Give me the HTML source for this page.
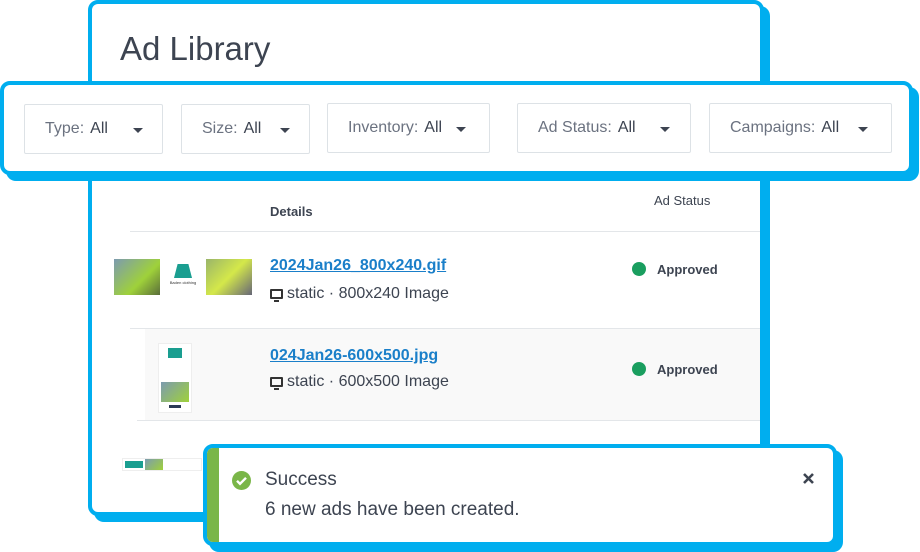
<!DOCTYPE html>
<html><head><meta charset="utf-8"><style>
*{box-sizing:border-box;margin:0;padding:0}
body{width:920px;height:552px;background:#fff;position:relative;overflow:hidden;font-family:"Liberation Sans",sans-serif;color:#3d4451}
.card{position:absolute;background:#fff;border:4px solid #00aeef;border-radius:10px;box-shadow:6px 6px 0 #00aeef}
.abs{position:absolute}
.f{position:absolute;border:1px solid #dde2e6;border-radius:2px;height:50px;font-size:16px;color:#6b7280;display:flex;align-items:center;padding-left:20px}
.f b{font-weight:normal;color:#3d4451;margin-left:6px}
.car{width:0;height:0;border-left:5px solid transparent;border-right:5px solid transparent;border-top:5px solid #3d4451;position:absolute;top:23px}
.link{color:#1a7fc9;font-weight:bold;font-size:16px;text-decoration:underline}
.sub{font-size:16px;color:#3d4451}
.dot{position:absolute;width:14px;height:14px;border-radius:50%;background:#1a9e5f}
.appr{position:absolute;font-size:13px;font-weight:bold;color:#3d4451}
.mon{display:inline-block;width:13px;height:10px;border:2px solid #333;border-radius:1px;position:relative;margin-right:4px;vertical-align:-1px}
.mon:after{content:"";position:absolute;left:2px;bottom:-5px;width:5px;height:2px;background:#333}
</style></head><body>
<div class="card" style="left:88px;top:0;width:676px;height:516px">
</div>
<div class="abs" style="left:120px;top:30px;font-size:33px;color:#3d4451">Ad Library</div>
<div class="abs" style="left:270px;top:204px;font-size:13px;font-weight:bold">Details</div>
<div class="abs" style="left:654px;top:193px;font-size:13px;color:#3d4451">Ad Status</div>
<div class="abs" style="left:130px;top:231px;width:630px;height:1px;background:#e3e6e9"></div>
<div class="abs" style="left:114px;top:259px;width:138px;height:36px;display:flex">
<div style="width:46px;background:linear-gradient(135deg,#7c9bb0,#9fd13a 60%,#5a6d3a)"></div>
<div style="width:46px;background:#fff;display:flex;flex-direction:column;align-items:center;padding-top:5px"><div style="width:18px;height:14px;background:#1a9e90;clip-path:polygon(20% 0,80% 0,100% 100%,0 100%)"></div><div style="font-size:4px;margin-top:2px;color:#333">Baden clothing</div></div>
<div style="width:46px;background:linear-gradient(135deg,#9ab56a,#d4e84a 50%,#667)"></div>
</div>
<div class="abs link" style="left:270px;top:257px">2024Jan26_800x240.gif</div>
<div class="abs sub" style="left:270px;top:285px"><span class="mon"></span>static · 800x240 Image</div>
<div class="dot" style="left:632px;top:262px"></div>
<div class="appr" style="left:657px;top:262px">Approved</div>
<div class="abs" style="left:130px;top:328px;width:630px;height:1px;background:#e3e6e9"></div>
<div class="abs" style="left:145px;top:329px;width:615px;height:91px;background:#f9f9f9"></div>
<div class="abs" style="left:137px;top:420px;width:623px;height:1px;background:#e3e6e9"></div>
<div class="abs" style="left:158px;top:343px;width:34px;height:70px;background:#fff;border:1px solid #eee;display:flex;flex-direction:column;align-items:center;padding-top:4px">
<div style="width:14px;height:10px;background:#1a9e90"></div><div style="height:24px"></div><div style="width:28px;height:20px;background:linear-gradient(135deg,#7c9bb0,#9fd13a)"></div><div style="width:12px;height:3px;background:#2b3a55;margin-top:3px"></div></div>
<div class="abs link" style="left:270px;top:347px">024Jan26-600x500.jpg</div>
<div class="abs sub" style="left:270px;top:373px"><span class="mon"></span>static · 600x500 Image</div>
<div class="dot" style="left:632px;top:362px"></div>
<div class="appr" style="left:657px;top:362px">Approved</div>
<div class="abs" style="left:122px;top:458px;width:80px;height:13px;border:1px solid #eee;display:flex"><div style="width:18px;background:#1a9e90;margin:2px"></div><div style="width:18px;background:linear-gradient(135deg,#7c9bb0,#9fd13a)"></div></div>

<div class="card" style="left:0;top:81px;width:913px;height:94px;border-radius:10px"></div>
<div class="f" style="left:24px;top:104px;width:139px">Type:<b>All</b><span class="car" style="left:108px"></span></div>
<div class="f" style="left:181px;top:104px;width:129px">Size:<b>All</b><span class="car" style="left:98px"></span></div>
<div class="f" style="left:327px;top:103px;width:163px">Inventory:<b>All</b><span class="car" style="left:128px"></span></div>
<div class="f" style="left:517px;top:103px;width:174px">Ad Status:<b>All</b><span class="car" style="left:142px"></span></div>
<div class="f" style="left:709px;top:103px;width:183px">Campaigns:<b>All</b><span class="car" style="left:148px"></span></div>

<div class="card" style="left:203px;top:444px;width:634px;height:102px;overflow:hidden">
<div class="abs" style="left:0;top:0;width:12px;height:100%;background:#7ab648"></div>
</div>
<svg class="abs" style="left:232px;top:471px" width="19" height="19" viewBox="0 0 19 19"><circle cx="9.5" cy="9.5" r="9.5" fill="#7ab648"/><path d="M5 9.8l3 3 6-6" stroke="#fff" stroke-width="2.4" fill="none"/></svg>
<div class="abs" style="left:265px;top:469px;font-size:19px;color:#3d4451">Success</div>
<div class="abs" style="left:265px;top:499px;font-size:19px;color:#3d4451">6 new ads have been created.</div>
<svg class="abs" style="left:802px;top:472px" width="13" height="13" viewBox="0 0 13 13"><path d="M2 2l9 9M11 2l-9 9" stroke="#3d4451" stroke-width="2.6"/></svg>
</body></html>
